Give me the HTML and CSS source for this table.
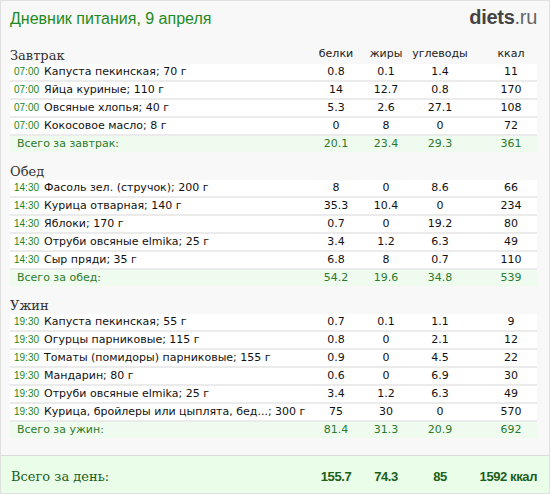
FILE: index.html
```html
<!DOCTYPE html>
<html lang="ru">
<head>
<meta charset="utf-8">
<title>Дневник питания</title>
<link rel="stylesheet" href="styles.css">
</head>
<body>
<div class="page">
  <header class="top">
    <h1 class="title">Дневник питания, 9 апреля</h1>
    <div class="logo"><b>diets</b>.ru</div>
  </header>

  <section class="meal">
    <div class="grid head">
      <h2 class="meal-name">Завтрак</h2>
      <span class="col">белки</span><span class="col">жиры</span><span class="col">углеводы</span><span class="col kc">ккал</span>
    </div>
    <div class="grid row"><span class="food"><i class="time">07:00</i>Капуста пекинская; 70 г</span><span class="col">0.8</span><span class="col">0.1</span><span class="col">1.4</span><span class="col kc">11</span></div>
    <div class="grid row"><span class="food"><i class="time">07:00</i>Яйца куриные; 110 г</span><span class="col">14</span><span class="col">12.7</span><span class="col">0.8</span><span class="col kc">170</span></div>
    <div class="grid row"><span class="food"><i class="time">07:00</i>Овсяные хлопья; 40 г</span><span class="col">5.3</span><span class="col">2.6</span><span class="col">27.1</span><span class="col kc">108</span></div>
    <div class="grid row"><span class="food"><i class="time">07:00</i>Кокосовое масло; 8 г</span><span class="col">0</span><span class="col">8</span><span class="col">0</span><span class="col kc">72</span></div>
    <div class="grid row total"><span class="food">Всего за завтрак:</span><span class="col">20.1</span><span class="col">23.4</span><span class="col">29.3</span><span class="col kc">361</span></div>
  </section>

  <section class="meal">
    <div class="grid head">
      <h2 class="meal-name">Обед</h2>
    </div>
    <div class="grid row"><span class="food"><i class="time">14:30</i>Фасоль зел. (стручок); 200 г</span><span class="col">8</span><span class="col">0</span><span class="col">8.6</span><span class="col kc">66</span></div>
    <div class="grid row"><span class="food"><i class="time">14:30</i>Курица отварная; 140 г</span><span class="col">35.3</span><span class="col">10.4</span><span class="col">0</span><span class="col kc">234</span></div>
    <div class="grid row"><span class="food"><i class="time">14:30</i>Яблоки; 170 г</span><span class="col">0.7</span><span class="col">0</span><span class="col">19.2</span><span class="col kc">80</span></div>
    <div class="grid row"><span class="food"><i class="time">14:30</i>Отруби овсяные elmika; 25 г</span><span class="col">3.4</span><span class="col">1.2</span><span class="col">6.3</span><span class="col kc">49</span></div>
    <div class="grid row"><span class="food"><i class="time">14:30</i>Сыр пряди; 35 г</span><span class="col">6.8</span><span class="col">8</span><span class="col">0.7</span><span class="col kc">110</span></div>
    <div class="grid row total"><span class="food">Всего за обед:</span><span class="col">54.2</span><span class="col">19.6</span><span class="col">34.8</span><span class="col kc">539</span></div>
  </section>

  <section class="meal">
    <div class="grid head">
      <h2 class="meal-name">Ужин</h2>
    </div>
    <div class="grid row"><span class="food"><i class="time">19:30</i>Капуста пекинская; 55 г</span><span class="col">0.7</span><span class="col">0.1</span><span class="col">1.1</span><span class="col kc">9</span></div>
    <div class="grid row"><span class="food"><i class="time">19:30</i>Огурцы парниковые; 115 г</span><span class="col">0.8</span><span class="col">0</span><span class="col">2.1</span><span class="col kc">12</span></div>
    <div class="grid row"><span class="food"><i class="time">19:30</i>Томаты (помидоры) парниковые; 155 г</span><span class="col">0.9</span><span class="col">0</span><span class="col">4.5</span><span class="col kc">22</span></div>
    <div class="grid row"><span class="food"><i class="time">19:30</i>Мандарин; 80 г</span><span class="col">0.6</span><span class="col">0</span><span class="col">6.9</span><span class="col kc">30</span></div>
    <div class="grid row"><span class="food"><i class="time">19:30</i>Отруби овсяные elmika; 25 г</span><span class="col">3.4</span><span class="col">1.2</span><span class="col">6.3</span><span class="col kc">49</span></div>
    <div class="grid row"><span class="food"><i class="time">19:30</i>Курица, бройлеры или цыплята, бед...; 300 г</span><span class="col">75</span><span class="col">30</span><span class="col">0</span><span class="col kc">570</span></div>
    <div class="grid row total"><span class="food">Всего за ужин:</span><span class="col">81.4</span><span class="col">31.3</span><span class="col">20.9</span><span class="col kc">692</span></div>
  </section>
</div>
<footer class="day">
  <div class="grid day-grid">
    <span class="day-label">Всего за день:</span><span class="col">155.7</span><span class="col">74.3</span><span class="col">85</span><span class="col kc day-kc">1592 ккал</span>
  </div>
</footer>
</body>
</html>
```
FILE: styles.css
```css
html, body {
  margin: 0;
  padding: 0;
}
body {
  width: 550px;
  height: 494px;
  box-sizing: border-box;
  border: 1px solid #e0e0e0;
  background: #f8f8f8;
  font-family: "DejaVu Sans", Verdana, sans-serif;
  font-size: 11px;
  color: #111;
  overflow: hidden;
}
.page {
  padding: 0 12px 15px 9px;
}
.top {
  display: flex;
  justify-content: space-between;
  align-items: center;
  height: 37px;
}
.title {
  margin: 0;
  font-family: "Liberation Sans", Arial, sans-serif;
  font-weight: normal;
  font-size: 16px;
  color: #1f8a1f;
  line-height: 20px;
  padding-bottom: 2px;
}
.logo {
  font-family: "Liberation Sans", Arial, sans-serif;
  font-size: 20px;
  color: #666;
  letter-spacing: -0.3px;
  padding-bottom: 4px;
}
.logo b {
  color: #444;
}
.grid {
  display: grid;
  grid-template-columns: 1fr 50px 50px 58px 68px;
  align-items: end;
}
.col {
  text-align: center;
  white-space: nowrap;
}
.kc {
  padding-left: 16px;
}
.head {
  height: 26px;
}
.meal-name {
  margin: 0;
  font-family: "DejaVu Serif", Georgia, serif;
  font-weight: normal;
  font-size: 13px;
  line-height: 16px;
  color: #333;
}
.head .col {
  line-height: 16px;
  padding-bottom: 2px;
  color: #222;
}
.row {
  background: #fff;
  height: 16px;
  line-height: 16px;
  border-bottom: 2px solid #ebebeb;
}
.food {
  display: flex;
  align-items: center;
  padding-left: 4px;
  white-space: nowrap;
  overflow: hidden;
}
.time {
  font-style: normal;
  font-family: "Liberation Sans", Arial, sans-serif;
  font-size: 10px;
  color: #1a861a;
  width: 30px;
  flex: none;
}
.total {
  background: #effbef;
  border-bottom: 2px solid #f8f8f8;
  color: #2b7a2b;
}
.total .food {
  padding-left: 7px;
}
.day {
  border-top: 1px solid #dcdcdc;
  background: #eafde9;
  height: 40px;
  padding: 0 12px 0 10px;
}
.day-grid {
  height: 40px;
  align-items: center;
  color: #1b5f1b;
}
.day-label {
  font-family: "DejaVu Serif", Georgia, serif;
  font-size: 13px;
}
.day .col {
  font-family: "Liberation Sans", Arial, sans-serif;
  font-weight: bold;
  font-size: 13px;
  letter-spacing: -0.4px;
}
.day-kc {
  text-align: right;
  padding-left: 0;
}
```
